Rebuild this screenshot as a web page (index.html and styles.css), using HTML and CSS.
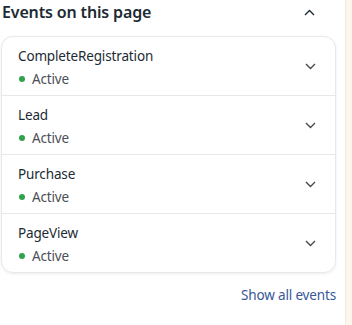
FILE: index.html
```html
<!DOCTYPE html>
<html lang="en">
<head>
    <meta charset="UTF-8">
    <meta name="viewport" content="width=device-width, initial-scale=1.0">
    <title>Events on this page</title>
    <link rel="stylesheet" href="styles.css">
</head>
<body>
    <div class="panel">
        <header class="panel-head">
            <h2>Events on this page</h2>
            <svg class="chev" width="11" height="7" viewBox="0 0 11 7"><path d="M1 6 L5.5 1.5 L10 6" fill="none" stroke="#1c2b33" stroke-width="1.4"/></svg>
        </header>
        <div class="card">
            <div class="row">
                <div class="info">
                    <div class="name">CompleteRegistration</div>
                    <div class="status"><span class="dot"></span>Active</div>
                </div>
                <svg class="chev" width="11" height="7" viewBox="0 0 11 7"><path d="M1 1 L5.5 5.5 L10 1" fill="none" stroke="#47494d" stroke-width="1.4"/></svg>
            </div>
            <div class="row">
                <div class="info">
                    <div class="name">Lead</div>
                    <div class="status"><span class="dot"></span>Active</div>
                </div>
                <svg class="chev" width="11" height="7" viewBox="0 0 11 7"><path d="M1 1 L5.5 5.5 L10 1" fill="none" stroke="#47494d" stroke-width="1.4"/></svg>
            </div>
            <div class="row">
                <div class="info">
                    <div class="name">Purchase</div>
                    <div class="status"><span class="dot"></span>Active</div>
                </div>
                <svg class="chev" width="11" height="7" viewBox="0 0 11 7"><path d="M1 1 L5.5 5.5 L10 1" fill="none" stroke="#47494d" stroke-width="1.4"/></svg>
            </div>
            <div class="row">
                <div class="info">
                    <div class="name">PageView</div>
                    <div class="status"><span class="dot"></span>Active</div>
                </div>
                <svg class="chev" width="11" height="7" viewBox="0 0 11 7"><path d="M1 1 L5.5 5.5 L10 1" fill="none" stroke="#47494d" stroke-width="1.4"/></svg>
            </div>
        </div>
        <div class="foot">
            <a href="#">Show all events</a>
        </div>
    </div>
    <div class="edge"></div>
</body>
</html>
```

FILE: styles.css
```css
html, body {
    height: 100%;
}

body {
    margin: 0;
    display: flex;
    background-color: #ffffff;
    font-family: "Noto Sans", "Open Sans", sans-serif;
    color: #1c2b33;
}

.panel {
    width: 346px;
    padding: 0 9px 0 1px;
    box-sizing: border-box;
}

.edge {
    width: 6px;
    background-color: #fdf6ec;
    border-left: 1px solid #f5e9d8;
}

.panel-head {
    display: flex;
    align-items: center;
    justify-content: space-between;
    height: 24px;
    padding: 0 21px 0 1px;
    margin-bottom: 12px;
}

.panel-head h2 {
    margin: 0;
    font-size: 16px;
    font-weight: 600;
    letter-spacing: -0.15px;
}

.card {
    border: 1px solid #e6e8ea;
    border-radius: 12px;
    box-shadow: 0 1px 3px rgba(0, 0, 0, 0.08);
}

.row {
    display: flex;
    align-items: center;
    justify-content: space-between;
    height: 58px;
    padding: 0 19px 0 16px;
    border-bottom: 1px solid #e6e8ea;
}

.row:last-child {
    border-bottom: none;
}

.info {
    padding-top: 3px;
}

.name {
    font-size: 13.5px;
    line-height: 20px;
    letter-spacing: -0.15px;
}

.status {
    display: flex;
    align-items: center;
    font-size: 13.5px;
    line-height: 20px;
    letter-spacing: -0.15px;
    color: #4b4f56;
    margin-top: 3px;
}

.dot {
    width: 6px;
    height: 6px;
    border-radius: 50%;
    background-color: #31a24c;
    margin: 0 7px 0 1px;
}

.foot {
    display: flex;
    justify-content: flex-end;
    padding-top: 13px;
}

.foot a {
    font-size: 13.5px;
    letter-spacing: -0.15px;
    color: #385898;
    text-decoration: none;
}
```
